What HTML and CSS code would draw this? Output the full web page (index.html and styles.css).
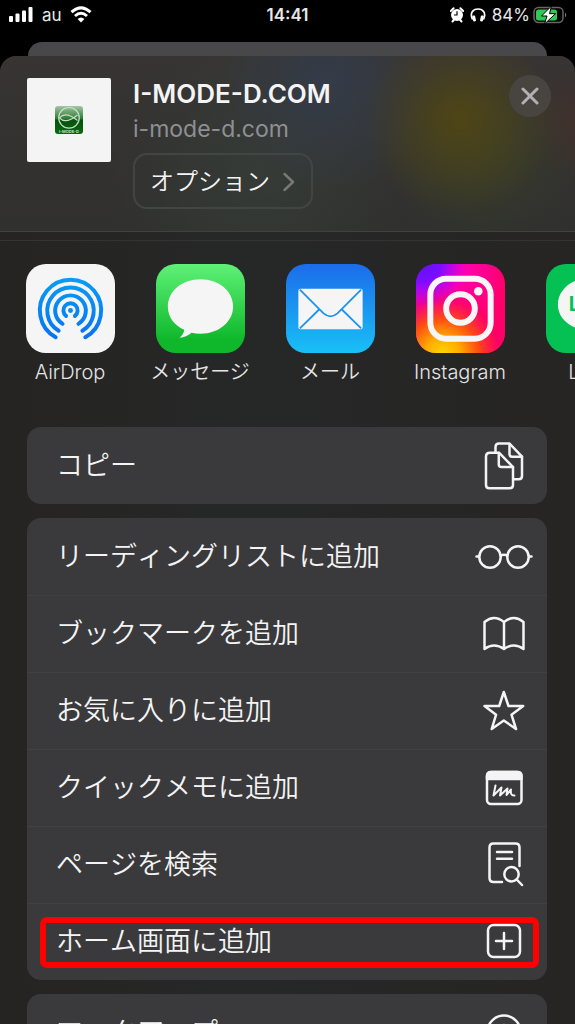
FILE: index.html
```html
<!DOCTYPE html>
<html lang="ja">
<head>
<meta charset="utf-8">
<meta name="viewport" content="width=device-width, initial-scale=1">
<title>I-MODE-D.COM</title>
<link rel="stylesheet" href="styles.css">
</head>
<body>
<header class="status">
  <div class="status-left">
    <svg width="26" height="18" viewBox="0 0 26 18" fill="#fff"><rect x="1" y="10" width="4" height="6" rx="1"/><rect x="7.500" y="7.500" width="4" height="8.500" rx="1"/><rect x="14" y="4.500" width="4" height="11.500" rx="1"/><rect x="20.500" y="1" width="4" height="15" rx="1"/></svg>
    <span class="carrier">au</span>
    <svg width="22" height="18" viewBox="0 0 22 18" fill="none" stroke="#fff" stroke-width="3"><path d="M1.500 6.200Q11-2.400 20.500 6.200"/><path d="M5 10Q11 4.600 17 10"/><path d="M11 16.500L7.600 13Q11 10 14.400 13Z" fill="#fff" stroke="none"/></svg>
  </div>
  <time class="clock">14:41</time>
  <div class="status-right">
    <svg width="14" height="16" viewBox="0 0 14 16"><path d="M.8 4L3.600 1.300M13.200 4L10.400 1.300M2.500 14.500L3.800 13M11.500 14.500L10.200 13" stroke="#fff" stroke-width="2" stroke-linecap="round"/><circle cx="7" cy="8" r="6" fill="#fff"/><path d="M7 4.300V8H4" fill="none" stroke="#000" stroke-width="1.200"/></svg>
    <svg width="16" height="16" viewBox="0 0 16 16"><path d="M2.500 12.500C-.5 6 3 2 8 2S16.500 6 13.500 12.500" fill="none" stroke="#fff" stroke-width="1.700"/><rect x="2.500" y="8.500" width="3" height="6" rx="1.200" fill="#fff" transform="rotate(-12 4 11)"/><rect x="10.500" y="8.500" width="3" height="6" rx="1.200" fill="#fff" transform="rotate(12 12 11)"/></svg>
    <span>84%</span>
    <svg width="34" height="18" viewBox="0 0 34 18"><rect x="1" y="1.500" width="29" height="15" rx="4.500" fill="none" stroke="#666" stroke-width="1.500"/><rect x="3" y="3.500" width="21" height="11" rx="2.500" fill="#30c952"/><path d="M32 6.500Q34.500 9 32 11.500Z" fill="#777"/><path d="M18.500 0L8.500 10H14L11.500 18L22.500 7.700H16.500Z" fill="#fff" stroke="#000" stroke-width="1"/></svg>
  </div>
</header>
<div class="behind"></div>
<main class="sheet">
  <section class="summary">
    <div class="thumb">
      <svg width="28" height="28" viewBox="0 0 28 28">
        <defs><linearGradient id="leaf" x1="0" y1="0" x2="0" y2="1"><stop offset="0" stop-color="#a3c6a4"/><stop offset=".45" stop-color="#2f7d35"/><stop offset=".5" stop-color="#07520d"/><stop offset="1" stop-color="#056b0c"/></linearGradient></defs>
        <rect width="28" height="28" rx="3" fill="url(#leaf)"/>
        <g fill="none" stroke="#c9ddc9" stroke-width="1.200"><circle cx="14" cy="11.800" r="10.300"/><path d="M22.500 14.500C17 10 10 5.500 4.500 11.800C10 18 17 13.500 22.500 9"/></g>
        <text x="14" y="26.500" text-anchor="middle" class="thumb-text">I-MODE-D</text>
      </svg>
    </div>
    <div class="info">
      <h1>I-MODE-D.COM</h1>
      <p>i-mode-d.com</p>
      <button class="options">オプション<svg width="14" height="20" viewBox="0 0 14 20" fill="none" stroke="#777" stroke-width="2.500" stroke-linecap="round" stroke-linejoin="round"><path d="M2.500 2L11 10L2.500 18"/></svg></button>
    </div>
    <button class="close" aria-label="閉じる"><svg width="18" height="18" viewBox="0 0 18 18" stroke="#b2b0b0" stroke-width="3" stroke-linecap="round"><path d="M2 2L16 16M16 2L2 16"/></svg></button>
  </section>
  <nav class="apps">
    <button class="app"><svg viewBox="0 0 90 90">
      <defs><linearGradient id="air" gradientUnits="userSpaceOnUse" x1="0" y1="13" x2="0" y2="75"><stop offset="0" stop-color="#0a9df5"/><stop offset="1" stop-color="#0874ef"/></linearGradient></defs>
      <rect width="90" height="90" rx="20" fill="#f5f5f6"/>
      <g fill="none" stroke="url(#air)" stroke-width="4" stroke-linecap="round"><path d="M30 74A31 31 0 1 1 60 74"/><path d="M33 67.500A23.500 23.500 0 1 1 57 67.500"/><path d="M37 60.500A15.500 15.500 0 1 1 53 60.500"/><path d="M40.500 52.500A7.200 7.200 0 1 1 49.500 52.500"/></g><circle cx="45" cy="47" r="2.500" fill="#078af2"/>
    </svg><span>AirDrop</span></button>
    <button class="app"><svg viewBox="0 0 90 90">
      <defs><linearGradient id="msg" x1="0" y1="0" x2="0" y2="1"><stop offset="0" stop-color="#5ff177"/><stop offset=".85" stop-color="#0fb82b"/><stop offset="1" stop-color="#0fb82b"/></linearGradient></defs>
      <rect width="90" height="90" rx="20" fill="url(#msg)"/><path d="M45 15.500C63.500 15.500 78 27.500 78 43S63.500 70.500 45 70.500Q40 70.500 36 69.500Q30.500 74 24 74.500C27 71.500 28.500 69 28.500 66.500C18.500 62 12 54 12 43C12 27.500 26.500 15.500 45 15.500Z" fill="#f5f5f5"/>
    </svg><span>メッセージ</span></button>
    <button class="app"><svg viewBox="0 0 90 90">
      <defs><linearGradient id="mail" x1="0" y1="0" x2="0" y2="1"><stop offset="0" stop-color="#1c6cea"/><stop offset="1" stop-color="#18c0f6"/></linearGradient></defs>
      <rect width="90" height="90" rx="20" fill="url(#mail)"/><rect x="12.500" y="25" width="65" height="41" rx="2" fill="#f5f5f5"/><path d="M14 26L38 50Q45 56 52 50L76 26M14 65L33.500 46M76 65L56.500 46" fill="none" stroke="#1c93ef" stroke-width="1.800"/>
    </svg><span>メール</span></button>
    <button class="app"><svg viewBox="0 0 90 90">
      <defs>
        <linearGradient id="insta" x1="0" y1="0" x2="1" y2=".3"><stop offset="0" stop-color="#b900ff"/><stop offset=".5" stop-color="#ff00b0"/><stop offset="1" stop-color="#ff0068"/></linearGradient>
        <radialGradient id="instaWarm" cx=".3" cy="1.020" r=".85"><stop offset="0" stop-color="#ffd800"/><stop offset=".22" stop-color="#ffae00"/><stop offset=".48" stop-color="#ff4b12"/><stop offset=".75" stop-color="#ff0062" stop-opacity=".7"/><stop offset="1" stop-color="#ff0080" stop-opacity="0"/></radialGradient>
        <radialGradient id="instaCool" cx=".08" cy="0" r=".5"><stop offset="0" stop-color="#5b12ff"/><stop offset=".4" stop-color="#7d0cff"/><stop offset="1" stop-color="#d000ff" stop-opacity="0"/></radialGradient>
      </defs>
      <rect width="90" height="90" rx="20" fill="url(#insta)"/><rect width="90" height="90" rx="20" fill="url(#instaWarm)"/><rect width="90" height="90" rx="20" fill="url(#instaCool)"/>
      <g fill="none" stroke="#f7f5f6" stroke-width="6"><rect x="14.500" y="15" width="61" height="60.500" rx="16"/><circle cx="45" cy="45" r="14.500"/></g><circle cx="63" cy="27.500" r="4.300" fill="#f7f5f6"/>
    </svg><span>Instagram</span></button>
    <button class="app"><svg viewBox="0 0 90 90"><rect width="90" height="90" rx="20" fill="#05c053"/><path d="M45 14C64 14 78 26 78 41C78 56 58 68 45 76V67C26 67 12 56 12 41C12 26 26 14 45 14Z" fill="#f5f5f5"/><text x="23" y="48" class="line-text">LINE</text></svg><span>LINE</span></button>
  </nav>
  <div class="actions">
    <section class="card">
      <button class="row">コピー<svg class="icon" viewBox="0 0 60 60"><path d="M21.500 16V11Q21.500 7.500 25 7.500H35.500L48 20.700V40Q48 43.300 44.500 43.300H40"/><path d="M35.500 8V18Q35.500 20.700 38 20.700H48"/><path d="M16 16.700H25L39 31V49Q39 52.300 35.500 52.300H15.500Q12 52.300 12 49V20.500Q12 16.700 16 16.700Z"/><path d="M24.800 17V28.500Q24.800 31 27.500 31H39"/></svg></button>
    </section>
    <section class="card">
      <button class="row">リーディングリストに追加<svg class="icon" viewBox="0 0 60 60"><circle cx="16" cy="30" r="10.700"/><circle cx="44" cy="30" r="10.700"/><path d="M26.500 28.500Q30 27 33.500 28.500M2.500 29.500H5M55 29.500H57.500"/></svg></button>
      <button class="row">ブックマークを追加<svg class="icon" viewBox="0 0 60 60"><path d="M30 18Q20 10 10.500 18V45Q20 38 30 45Q40 38 49.500 45V18Q40 10 30 18V45"/></svg></button>
      <button class="row">お気に入りに追加<svg class="icon" viewBox="0 0 60 60"><path d="M29.800 11L34.500 25H49.200L37.500 33.700L42 48L29.800 39.500L17.700 48L22.100 33.700L10.500 25H25.200Z"/></svg></button>
      <button class="row">クイックメモに追加<svg class="icon" viewBox="0 0 60 60"><rect x="13" y="14" width="34.500" height="32" rx="4"/><path d="M13 21V18Q13 14 17 14H43.500Q47.500 14 47.500 18V21Z" fill="#f4f4f4"/><path d="M21.500 27.500L19.500 37.500L27.500 29.500L26 37.500L33.500 30.500L32.500 37L37 31.500Q36 38 40.500 37.500" stroke-width="2"/></svg></button>
      <button class="row">ページを検索<svg class="icon" viewBox="0 0 60 60"><path d="M28 47H19.500Q15.500 47 15.500 43V12.500Q15.500 8.500 19.500 8.500H41.500Q45.500 8.500 45.500 12.500V31"/><path d="M23 17H38M23 23.700H38M42.700 44.500L48 50"/><circle cx="37.500" cy="39.300" r="7.200"/></svg></button>
      <button class="row marked">ホーム画面に追加<svg class="icon" viewBox="0 0 60 60"><rect x="14" y="13" width="32" height="32" rx="5.500"/><path d="M30 21V37M22 29H38"/></svg></button>
    </section>
    <section class="card">
      <button class="row">マークアップ<svg class="icon" viewBox="0 0 60 60"><circle cx="30" cy="29" r="16.500"/><path d="M24 44L30 22L36 44"/></svg></button>
    </section>
  </div>
</main>
</body>
</html>
```
FILE: styles.css
```css
* { box-sizing: border-box; }

body {
  margin: 0;
  height: 100vh;
  overflow: hidden;
  display: flex;
  flex-direction: column;
  background: #000;
  color: #f4f4f4;
  font-family: Inter, "Noto Sans CJK JP", sans-serif;
}

button {
  margin: 0;
  padding: 0;
  border: 0;
  background: none;
  color: inherit;
  font: inherit;
}

svg { display: block; flex: none; }

.status {
  flex: none;
  height: 42px;
  padding: 4px 8px 0 8px;
  display: grid;
  grid-template-columns: 1fr auto 1fr;
  align-items: start;
  font-size: 17px;
  line-height: 22px;
  color: #e8e8e8;
}

.status-left,
.status-right {
  display: flex;
  align-items: center;
}

.status-left { gap: 8px; }
.status-right { justify-content: flex-end; gap: 6px; }
.status-right span { margin-right: -3px; }
.clock { font-weight: 600; }

.behind {
  flex: none;
  height: 34px;
  margin: 0 28px -20px;
  border-radius: 14px 14px 0 0;
  background: #48484a;
}

.sheet {
  flex: 1;
  min-height: 0;
  overflow: hidden;
  position: relative;
  border-radius: 16px 16px 0 0;
  background: linear-gradient(90deg, #252422, #262727 40%, #262524);
}

.summary {
  display: flex;
  align-items: flex-start;
  padding: 22px 24px 22px 27px;
  border-bottom: 1px solid #414240;
  background:
    radial-gradient(circle 95px at 80% 36%, rgba(80, 70, 20, .95), rgba(80, 70, 22, .45) 50%, rgba(80, 70, 22, 0)),
    radial-gradient(circle 100px at 84% 55%, rgba(62, 76, 32, .4), rgba(62, 76, 32, 0)),
    radial-gradient(circle 110px at 57% 15%, #343c49, rgba(52, 60, 73, 0)),
    radial-gradient(circle 60px at 102% 38%, rgba(78, 46, 40, .6), rgba(78, 46, 40, 0)),
    radial-gradient(circle 150px at 45% 65%, #353b36, rgba(53, 59, 54, 0)),
    linear-gradient(#373433, #30302f);
}

.thumb {
  flex: none;
  width: 84px;
  height: 84px;
  display: grid;
  place-items: center;
  border-radius: 2px;
  background: #f4f4f4;
}

.thumb-text { font: 600 4px Inter, sans-serif; fill: #d5e4d5; }

.info {
  flex: 1;
  margin-left: 22px;
}

.info h1 {
  margin: 0;
  font-size: 26px;
  font-weight: 600;
  line-height: 32px;
}

.info p {
  margin: 3px 0 8px;
  font-size: 23px;
  line-height: 32px;
  color: #8f8f94;
}

.options {
  display: flex;
  align-items: center;
  gap: 12px;
  height: 56px;
  padding: 2px 15px 0;
  border: 2px solid #434444;
  border-radius: 14px;
  font-size: 24px;
  font-weight: 350;
  line-height: 32px;
}

.close {
  flex: none;
  width: 42px;
  height: 42px;
  margin-top: -3px;
  display: grid;
  place-items: center;
  border-radius: 50%;
  background: #484540;
}

.apps {
  margin-top: 8px;
  padding: 23px 0 0 5px;
  border-top: 1px solid #343434;
  display: flex;
  overflow: hidden;
}

.app {
  flex: none;
  width: 130px;
  display: flex;
  flex-direction: column;
  align-items: center;
  gap: 4px;
  font-size: 20px;
  font-weight: 350;
  line-height: 30px;
  color: #e4e4e4;
}

.app svg { width: 89px; height: 89px; }
.line-text { font: 700 20px Inter, sans-serif; fill: #05c053; }

.actions {
  display: flex;
  flex-direction: column;
  gap: 14px;
  padding: 40px 28px 0 27px;
}

.card {
  border-radius: 14px;
  background: #3a3a3c;
}

.row {
  position: relative;
  width: 100%;
  height: 77px;
  padding: 0 13px 0 29px;
  display: flex;
  align-items: center;
  justify-content: space-between;
  font-size: 27px;
  font-weight: 350;
  font-kerning: none;
  line-height: 40px;
  text-align: left;
}

.row + .row { border-top: 1px solid #414143; }

.icon {
  width: 60px;
  height: 60px;
  fill: none;
  stroke: #f4f4f4;
  stroke-width: 2.5;
  stroke-linecap: round;
  stroke-linejoin: round;
}

.marked::after {
  content: "";
  position: absolute;
  inset: 13px 8px 12px 13px;
  border: 6px solid #f00;
  border-radius: 7px;
}
```
